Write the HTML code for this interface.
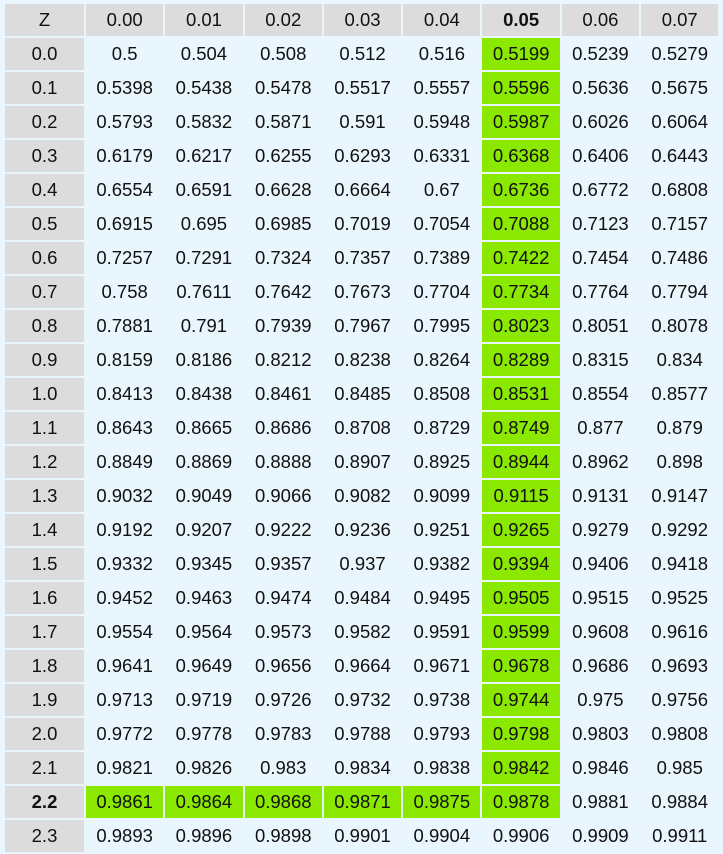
<!DOCTYPE html><html><head><meta charset="utf-8"><style>
html,body{margin:0;padding:0;background:#eaf6fd;width:723px;height:827px;overflow:hidden}
table{position:absolute;left:3px;top:2px;border-collapse:separate;border-spacing:2px;table-layout:fixed;font-family:"Liberation Sans",sans-serif;font-size:18.5px;color:#111}
td,th{height:32px;padding:0;text-align:center;font-weight:normal;white-space:nowrap}
th,td.z{background:#dcdcdc}
.g{background:#8be800}
.b{font-weight:bold}
</style></head><body>
<table>
<colgroup><col style="width:79px"><col style="width:77.3px"><col style="width:77.3px"><col style="width:77.3px"><col style="width:77.3px"><col style="width:77.3px"><col style="width:77.3px"><col style="width:77.3px"><col style="width:77.3px"></colgroup>
<tr><th>Z</th><th>0.00</th><th>0.01</th><th>0.02</th><th>0.03</th><th>0.04</th><th class="b">0.05</th><th>0.06</th><th>0.07</th></tr>
<tr><td class="z">0.0</td><td>0.5</td><td>0.504</td><td>0.508</td><td>0.512</td><td>0.516</td><td class="g">0.5199</td><td>0.5239</td><td>0.5279</td></tr>
<tr><td class="z">0.1</td><td>0.5398</td><td>0.5438</td><td>0.5478</td><td>0.5517</td><td>0.5557</td><td class="g">0.5596</td><td>0.5636</td><td>0.5675</td></tr>
<tr><td class="z">0.2</td><td>0.5793</td><td>0.5832</td><td>0.5871</td><td>0.591</td><td>0.5948</td><td class="g">0.5987</td><td>0.6026</td><td>0.6064</td></tr>
<tr><td class="z">0.3</td><td>0.6179</td><td>0.6217</td><td>0.6255</td><td>0.6293</td><td>0.6331</td><td class="g">0.6368</td><td>0.6406</td><td>0.6443</td></tr>
<tr><td class="z">0.4</td><td>0.6554</td><td>0.6591</td><td>0.6628</td><td>0.6664</td><td>0.67</td><td class="g">0.6736</td><td>0.6772</td><td>0.6808</td></tr>
<tr><td class="z">0.5</td><td>0.6915</td><td>0.695</td><td>0.6985</td><td>0.7019</td><td>0.7054</td><td class="g">0.7088</td><td>0.7123</td><td>0.7157</td></tr>
<tr><td class="z">0.6</td><td>0.7257</td><td>0.7291</td><td>0.7324</td><td>0.7357</td><td>0.7389</td><td class="g">0.7422</td><td>0.7454</td><td>0.7486</td></tr>
<tr><td class="z">0.7</td><td>0.758</td><td>0.7611</td><td>0.7642</td><td>0.7673</td><td>0.7704</td><td class="g">0.7734</td><td>0.7764</td><td>0.7794</td></tr>
<tr><td class="z">0.8</td><td>0.7881</td><td>0.791</td><td>0.7939</td><td>0.7967</td><td>0.7995</td><td class="g">0.8023</td><td>0.8051</td><td>0.8078</td></tr>
<tr><td class="z">0.9</td><td>0.8159</td><td>0.8186</td><td>0.8212</td><td>0.8238</td><td>0.8264</td><td class="g">0.8289</td><td>0.8315</td><td>0.834</td></tr>
<tr><td class="z">1.0</td><td>0.8413</td><td>0.8438</td><td>0.8461</td><td>0.8485</td><td>0.8508</td><td class="g">0.8531</td><td>0.8554</td><td>0.8577</td></tr>
<tr><td class="z">1.1</td><td>0.8643</td><td>0.8665</td><td>0.8686</td><td>0.8708</td><td>0.8729</td><td class="g">0.8749</td><td>0.877</td><td>0.879</td></tr>
<tr><td class="z">1.2</td><td>0.8849</td><td>0.8869</td><td>0.8888</td><td>0.8907</td><td>0.8925</td><td class="g">0.8944</td><td>0.8962</td><td>0.898</td></tr>
<tr><td class="z">1.3</td><td>0.9032</td><td>0.9049</td><td>0.9066</td><td>0.9082</td><td>0.9099</td><td class="g">0.9115</td><td>0.9131</td><td>0.9147</td></tr>
<tr><td class="z">1.4</td><td>0.9192</td><td>0.9207</td><td>0.9222</td><td>0.9236</td><td>0.9251</td><td class="g">0.9265</td><td>0.9279</td><td>0.9292</td></tr>
<tr><td class="z">1.5</td><td>0.9332</td><td>0.9345</td><td>0.9357</td><td>0.937</td><td>0.9382</td><td class="g">0.9394</td><td>0.9406</td><td>0.9418</td></tr>
<tr><td class="z">1.6</td><td>0.9452</td><td>0.9463</td><td>0.9474</td><td>0.9484</td><td>0.9495</td><td class="g">0.9505</td><td>0.9515</td><td>0.9525</td></tr>
<tr><td class="z">1.7</td><td>0.9554</td><td>0.9564</td><td>0.9573</td><td>0.9582</td><td>0.9591</td><td class="g">0.9599</td><td>0.9608</td><td>0.9616</td></tr>
<tr><td class="z">1.8</td><td>0.9641</td><td>0.9649</td><td>0.9656</td><td>0.9664</td><td>0.9671</td><td class="g">0.9678</td><td>0.9686</td><td>0.9693</td></tr>
<tr><td class="z">1.9</td><td>0.9713</td><td>0.9719</td><td>0.9726</td><td>0.9732</td><td>0.9738</td><td class="g">0.9744</td><td>0.975</td><td>0.9756</td></tr>
<tr><td class="z">2.0</td><td>0.9772</td><td>0.9778</td><td>0.9783</td><td>0.9788</td><td>0.9793</td><td class="g">0.9798</td><td>0.9803</td><td>0.9808</td></tr>
<tr><td class="z">2.1</td><td>0.9821</td><td>0.9826</td><td>0.983</td><td>0.9834</td><td>0.9838</td><td class="g">0.9842</td><td>0.9846</td><td>0.985</td></tr>
<tr><td class="z b">2.2</td><td class="g">0.9861</td><td class="g">0.9864</td><td class="g">0.9868</td><td class="g">0.9871</td><td class="g">0.9875</td><td class="g">0.9878</td><td>0.9881</td><td>0.9884</td></tr>
<tr><td class="z">2.3</td><td>0.9893</td><td>0.9896</td><td>0.9898</td><td>0.9901</td><td>0.9904</td><td>0.9906</td><td>0.9909</td><td>0.9911</td></tr>
</table>
</body></html>
